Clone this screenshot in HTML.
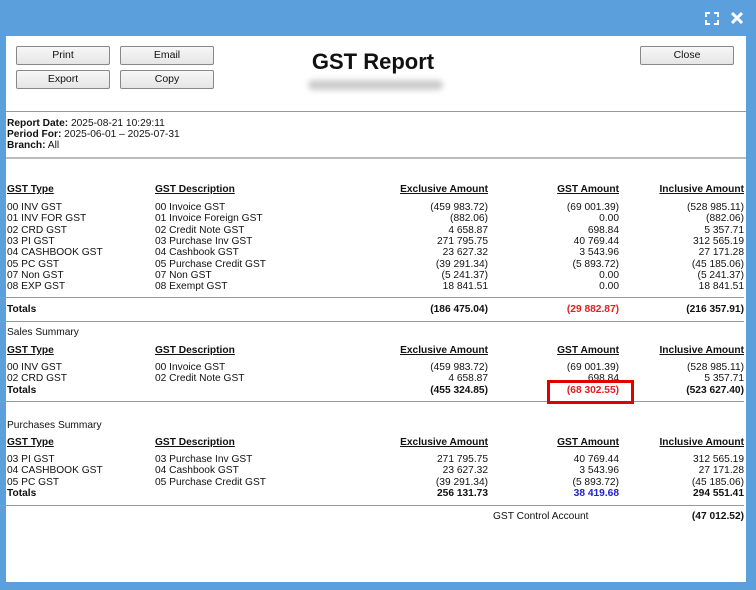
<!DOCTYPE html>
<html><head><style>
body{margin:0;width:756px;height:590px;background:#5b9fdc;position:relative;overflow:hidden;font-family:"Liberation Sans",Arial,sans-serif;font-size:10.2px;color:#111}
#w{position:absolute;left:6px;top:36px;width:740px;height:546px;background:#fff}
.a{position:absolute;white-space:nowrap;line-height:12px}
.r{text-align:right}
.b{font-weight:bold}
.u{text-decoration:underline;font-weight:bold}
.btn{position:absolute;width:92px;height:17px;border:1px solid #888;border-radius:2px;background:linear-gradient(#f7f7f7,#e6e6e6);text-align:center;line-height:17px;font-size:10.5px}
.hl{position:absolute;left:0;width:744px;height:1px;background:#999}
</style></head><body>
<svg style="position:absolute;left:705px;top:12px" width="14" height="13" viewBox="0 0 14 13" fill="none" stroke="#fff" stroke-width="2"><path d="M1 5V1h4M9 1h4v4M13 8v4H9M5 12H1V8"/></svg>
<svg style="position:absolute;left:731px;top:12px" width="12" height="12" viewBox="0 0 12 12" stroke="#fff" stroke-width="3"><path d="M1 1l10 10M11 1L1 11"/></svg>
<div id="w"></div>
<div class="btn" style="left:16px;top:46px">Print</div>
<div class="btn" style="left:120px;top:46px">Email</div>
<div class="btn" style="left:16px;top:70px">Export</div>
<div class="btn" style="left:120px;top:70px">Copy</div>
<div class="btn" style="left:640px;top:46px">Close</div>
<div class="a b" style="left:300px;top:49px;width:146px;text-align:center;font-size:22px;line-height:26px">GST Report</div>
<div style="position:absolute;left:308px;top:80px;width:135px;height:10px;background:#ccc;filter:blur(3px);border-radius:5px"></div>
<div class="hl" style="top:111px;left:6px;width:740px"></div>
<div class="a" style="left:7px;top:118px"><b>Report Date:</b> 2025-08-21 10:29:11</div>
<div class="a" style="left:7px;top:129px"><b>Period For:</b> 2025-06-01 – 2025-07-31</div>
<div class="a" style="left:7px;top:140px"><b>Branch:</b> All</div>
<div class="hl" style="top:157px;left:6px;width:740px;height:2px;background:#bbb"></div>

<div class="a u" style="left:7px;top:184px">GST Type</div>
<div class="a u" style="left:155px;top:184px">GST Description</div>
<div class="a u r" style="left:388px;top:184px;width:100px">Exclusive Amount</div>
<div class="a u r" style="left:519px;top:184px;width:100px">GST Amount</div>
<div class="a u r" style="left:644px;top:184px;width:100px">Inclusive Amount</div>
<div class="a" style="left:7px;top:202px;line-height:11.35px">00 INV GST<br>01 INV FOR GST<br>02 CRD GST<br>03 PI GST<br>04 CASHBOOK GST<br>05 PC GST<br>07 Non GST<br>08 EXP GST</div>
<div class="a" style="left:155px;top:202px;line-height:11.35px">00 Invoice GST<br>01 Invoice Foreign GST<br>02 Credit Note GST<br>03 Purchase Inv GST<br>04 Cashbook GST<br>05 Purchase Credit GST<br>07 Non GST<br>08 Exempt GST</div>
<div class="a r" style="left:388px;top:202px;width:100px;line-height:11.35px">(459 983.72)<br>(882.06)<br>4 658.87<br>271 795.75<br>23 627.32<br>(39 291.34)<br>(5 241.37)<br>18 841.51</div>
<div class="a r" style="left:519px;top:202px;width:100px;line-height:11.35px">(69 001.39)<br>0.00<br>698.84<br>40 769.44<br>3 543.96<br>(5 893.72)<br>0.00<br>0.00</div>
<div class="a r" style="left:644px;top:202px;width:100px;line-height:11.35px">(528 985.11)<br>(882.06)<br>5 357.71<br>312 565.19<br>27 171.28<br>(45 185.06)<br>(5 241.37)<br>18 841.51</div>
<div class="hl" style="top:297px"></div>
<div class="a b" style="left:7px;top:304px">Totals</div>
<div class="a b r" style="left:388px;top:304px;width:100px">(186 475.04)</div>
<div class="a b r" style="left:519px;top:304px;width:100px;color:#e02020">(29 882.87)</div>
<div class="a b r" style="left:644px;top:304px;width:100px">(216 357.91)</div>
<div class="hl" style="top:321px"></div>

<div class="a" style="left:7px;top:327px">Sales Summary</div>
<div class="a u" style="left:7px;top:345px">GST Type</div>
<div class="a u" style="left:155px;top:345px">GST Description</div>
<div class="a u r" style="left:388px;top:345px;width:100px">Exclusive Amount</div>
<div class="a u r" style="left:519px;top:345px;width:100px">GST Amount</div>
<div class="a u r" style="left:644px;top:345px;width:100px">Inclusive Amount</div>
<div class="a" style="left:7px;top:362px;line-height:11.4px">00 INV GST<br>02 CRD GST<br><b>Totals</b></div>
<div class="a" style="left:155px;top:362px;line-height:11.4px">00 Invoice GST<br>02 Credit Note GST</div>
<div class="a r" style="left:388px;top:362px;width:100px;line-height:11.4px">(459 983.72)<br>4 658.87<br><b>(455 324.85)</b></div>
<div class="a r" style="left:519px;top:362px;width:100px;line-height:11.4px">(69 001.39)<br>698.84<br><b style="color:#e02020">(68 302.55)</b></div>
<div class="a r" style="left:644px;top:362px;width:100px;line-height:11.4px">(528 985.11)<br>5 357.71<br><b>(523 627.40)</b></div>
<div class="hl" style="top:401px"></div>
<div style="position:absolute;left:547px;top:380px;width:81px;height:18px;border:3px solid #e00000"></div>

<div class="a" style="left:7px;top:420px">Purchases Summary</div>
<div class="a u" style="left:7px;top:437px">GST Type</div>
<div class="a u" style="left:155px;top:437px">GST Description</div>
<div class="a u r" style="left:388px;top:437px;width:100px">Exclusive Amount</div>
<div class="a u r" style="left:519px;top:437px;width:100px">GST Amount</div>
<div class="a u r" style="left:644px;top:437px;width:100px">Inclusive Amount</div>
<div class="a" style="left:7px;top:454px;line-height:11.4px">03 PI GST<br>04 CASHBOOK GST<br>05 PC GST<br><b>Totals</b></div>
<div class="a" style="left:155px;top:454px;line-height:11.4px">03 Purchase Inv GST<br>04 Cashbook GST<br>05 Purchase Credit GST</div>
<div class="a r" style="left:388px;top:454px;width:100px;line-height:11.4px">271 795.75<br>23 627.32<br>(39 291.34)<br><b>256 131.73</b></div>
<div class="a r" style="left:519px;top:454px;width:100px;line-height:11.4px">40 769.44<br>3 543.96<br>(5 893.72)<br><b style="color:#2020d0">38 419.68</b></div>
<div class="a r" style="left:644px;top:454px;width:100px;line-height:11.4px">312 565.19<br>27 171.28<br>(45 185.06)<br><b>294 551.41</b></div>
<div class="hl" style="top:505px"></div>
<div class="a" style="left:493px;top:511px">GST Control Account</div>
<div class="a b r" style="left:644px;top:511px;width:100px">(47 012.52)</div>
</body></html>
